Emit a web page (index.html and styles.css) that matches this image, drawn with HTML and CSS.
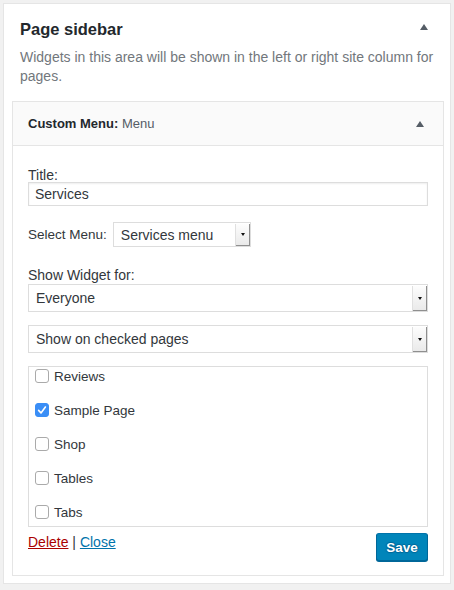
FILE: index.html
```html
<!DOCTYPE html>
<html>
<head>
<meta charset="utf-8">
<link rel="stylesheet" href="styles.css">
</head>
<body>
<div class="sidebar">
  <div class="sidebar-head">
    <h2 class="sidebar-title">Page sidebar</h2>
    <span class="toggle toggle-top"></span>
  </div>
  <p class="sidebar-desc">Widgets in this area will be shown in the left or right site column for pages.</p>

  <div class="widget">
    <div class="widget-top">
      <h3 class="widget-title">Custom Menu: <span class="in-title">Menu</span></h3>
      <span class="toggle"></span>
    </div>
    <div class="widget-inside">
      <label class="field-label">Title:</label>
      <div class="input">Services</div>

      <div class="menu-row">
        <span class="row-label">Select Menu:</span>
        <div class="select select-small"><span class="select-text">Services menu</span><span class="select-arrow"><span class="caret"></span></span></div>
      </div>

      <label class="field-label label-show">Show Widget for:</label>
      <div class="select select-wide"><span class="select-text">Everyone</span><span class="select-arrow"><span class="caret"></span></span></div>

      <div class="select select-wide select-gap"><span class="select-text">Show on checked pages</span><span class="select-arrow"><span class="caret"></span></span></div>

      <div class="checklist">
        <ul class="pages">
          <li class="page"><span class="cb"></span>Reviews</li>
          <li class="page"><span class="cb cb-on"><svg width="14" height="14" viewBox="0 0 14 14"><path d="M3.6 7.4 L6 9.9 L10.4 4" fill="none" stroke="#fff" stroke-width="1.6" stroke-linecap="round" stroke-linejoin="round"/></svg></span>Sample Page</li>
          <li class="page"><span class="cb"></span>Shop</li>
          <li class="page"><span class="cb"></span>Tables</li>
          <li class="page"><span class="cb"></span>Tabs</li>
        </ul>
      </div>

      <div class="widget-foot">
        <div class="links"><a class="link-delete" href="#">Delete</a> | <a class="link-close" href="#">Close</a></div>
        <button class="btn-save">Save</button>
      </div>
    </div>
  </div>
</div>
</body>
</html>
```

FILE: styles.css
```css
html, body {
  margin: 0;
  padding: 0;
}
body {
  background: #f1f1f1;
  padding: 3px;
  font-family: "Liberation Sans", Arial, sans-serif;
  color: #32373c;
  font-size: 13px;
}
.sidebar {
  width: 446px;
  height: 579px;
  background: #fff;
  border: 1px solid #e5e5e5;
  box-sizing: content-box;
}
.sidebar-head {
  display: flex;
  justify-content: space-between;
  align-items: center;
  padding: 12px 22px 0 16px;
}
.sidebar-title {
  margin: 0;
  font-size: 16.5px;
  line-height: 26px;
  font-weight: 600;
  color: #23282d;
}
.toggle {
  width: 0;
  height: 0;
  border-left: 4px solid transparent;
  border-right: 4px solid transparent;
  border-bottom: 6px solid #555d66;
}
.toggle-top {
  margin-top: -4px;
}
.sidebar-desc {
  margin: 6px 12px 0 16px;
  font-size: 14px;
  line-height: 19px;
  color: #72777c;
}
.widget {
  margin: 15px 6px 0 8px;
  border: 1px solid #e5e5e5;
  background: #fff;
}
.widget-top {
  height: 43px;
  background: #fafafa;
  border-bottom: 1px solid #e5e5e5;
  display: flex;
  align-items: center;
  justify-content: space-between;
  padding: 0 19px 0 15px;
}
.widget-title {
  margin: 0;
  font-size: 13px;
  font-weight: 600;
  color: #23282d;
}
.in-title {
  font-weight: 400;
  color: #555d66;
}
.widget-inside {
  padding: 20px 15px 14px 15px;
}
.field-label {
  display: block;
  font-size: 14px;
  line-height: 18px;
  height: 16px;
}
.input {
  height: 22px;
  line-height: 22px;
  border: 1px solid #ddd;
  box-shadow: inset 0 1px 2px rgba(0,0,0,0.07);
  padding: 0 6px;
  font-size: 14px;
  color: #32373c;
}
.menu-row {
  display: flex;
  align-items: center;
  gap: 6px;
  margin-top: 16px;
}
.row-label {
  font-size: 13.5px;
  line-height: 16px;
}
.select {
  display: flex;
  align-items: stretch;
  border: 1px solid #ddd;
  background: #fff;
  box-sizing: border-box;
}
.select-text {
  flex: 1;
  padding: 0 7px;
  font-size: 14px;
  display: flex;
  align-items: center;
  color: #32373c;
}
.select-small {
  width: 138px;
  height: 25px;
}
.select-wide {
  height: 28px;
  margin-top: 2px;
}
.select-gap {
  margin-top: 13px;
}
.label-show {
  margin-top: 19px;
}
.select-arrow {
  width: 14px;
  display: flex;
  align-items: center;
  justify-content: center;
  background: linear-gradient(#fdfdfd, #e9e9e9);
  border-left: 1px solid #e0e0e0;
  box-shadow: inset -1px -1px 0 #8f8f8f;
  margin: 1px 0 0 0;
}
.caret {
  width: 0;
  height: 0;
  border-left: 2.5px solid transparent;
  border-right: 2.5px solid transparent;
  border-top: 3px solid #111;
  margin-top: -1px;
}
.checklist {
  margin-top: 13px;
  height: 159px;
  border: 1px solid #ddd;
  overflow: hidden;
}
.pages {
  list-style: none;
  margin: -8px 0 0 0;
  padding: 0 0 0 6px;
}
.page {
  height: 34px;
  display: flex;
  align-items: center;
  font-size: 13.5px;
  color: #32373c;
}
.cb {
  width: 12px;
  height: 12px;
  border: 1px solid #aaa;
  border-radius: 3px;
  background: #fff;
  margin-right: 5px;
  display: inline-flex;
}
.cb-on {
  background: #3a8ef6;
  border-color: #3a8ef6;
}
.cb-on svg {
  margin: -1px;
}
.widget-foot {
  display: flex;
  justify-content: space-between;
  align-items: flex-start;
  margin-top: 5px;
}
.links {
  line-height: 18px;
  margin-top: 1px;
  color: #32373c;
  font-size: 14px;
}
.link-delete {
  color: #a00;
  text-decoration: underline;
}
.link-close {
  color: #0073aa;
  text-decoration: underline;
}
.btn-save {
  margin-top: 1px;
  width: 52px;
  height: 28px;
  background: #0085ba;
  border: 1px solid #0073aa;
  border-color: #0073aa #006799 #006799;
  border-radius: 3px;
  box-shadow: 0 1px 0 #006799;
  color: #fff;
  font-family: "Liberation Sans", Arial, sans-serif;
  font-weight: 700;
  font-size: 13.5px;
  text-shadow: 0 -1px 1px #006799, 1px 0 1px #006799, 0 1px 1px #006799, -1px 0 1px #006799;
  padding: 0;
}
```
